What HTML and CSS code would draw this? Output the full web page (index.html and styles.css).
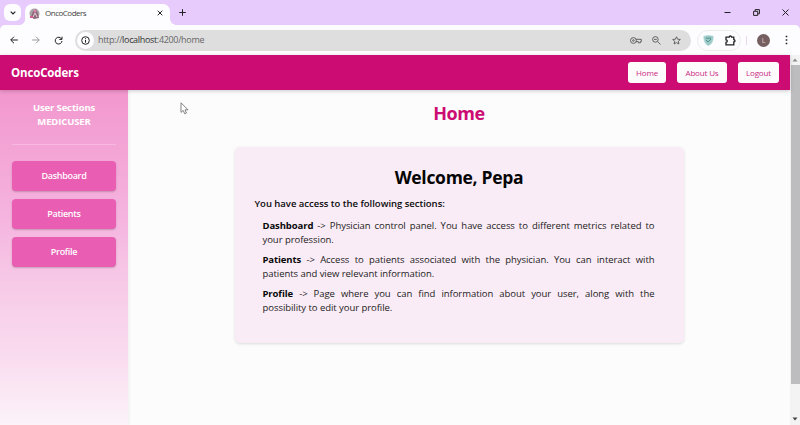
FILE: index.html
```html
<!DOCTYPE html>
<html lang="en">
<head>
<meta charset="utf-8">
<title>OncoCoders</title>
<link rel="stylesheet" href="styles.css">
</head>
<body>
<div class="tabs">
  <div class="tab-search"><svg width="6" height="4" viewBox="0 0 6 4"><path d="M.7.7 3 3 5.3.7"/></svg></div>
  <div class="tab">
    <svg class="favicon" width="11" height="11" viewBox="0 0 11 11"><circle cx="5.5" cy="5.5" r="5" fill="#a9a3a5"/><path d="M2 9 4 3l3-2 2 5 1 4-5 1z" fill="#8c697b"/><circle cx="6" cy="3" r="1.5" fill="#d982b0"/><path d="m4 9 2-4 2 4" stroke="#e8ced9" fill="none"/><path d="M1 8h3v2H1z" fill="#d85b91"/></svg>
    <span class="tab-title">OncoCoders</span>
    <svg class="tab-close" width="6" height="6" viewBox="0 0 6 6"><path d="m.7.7 4.6 4.6m0-4.6L.7 5.3"/></svg>
  </div>
  <svg class="plus" width="7" height="7" viewBox="0 0 7 7"><path d="M3.5.2v6.6M.2 3.5h6.6"/></svg>
  <div class="window-controls">
    <svg width="7" height="7" viewBox="0 0 7 7"><path d="M.5 3.5h6"/></svg>
    <svg width="7" height="7" viewBox="0 0 7 7"><path d="M.6 2.3h4.1v4.1H.6zM2.2 2V.6h4.2v4.2H5"/></svg>
    <svg width="7" height="7" viewBox="0 0 7 7"><path d="m.5.5 6 6m0-6-6 6"/></svg>
  </div>
</div>
<div class="toolbar">
  <svg class="back" width="8" height="8" viewBox="0 0 8 8"><path d="M7.8 4H.8M4 .7.7 4 4 7.3"/></svg>
  <svg class="forward" width="8" height="8" viewBox="0 0 8 8"><path d="M.2 4h7M4 .7 7.3 4 4 7.3"/></svg>
  <svg class="reload" width="9" height="9" viewBox="0 0 9 9"><path d="M7.6 3A3.4 3.4 0 1 0 8 5M8 .7v2.7H5.3"/></svg>
  <div class="address">
    <span class="site-info"><svg width="9" height="9" viewBox="0 0 9 9"><circle cx="4.5" cy="4.5" r="3.8"/><path d="M4.5 4v2.7M4.5 2.2v1"/></svg></span>
    <span class="url">http://<b>localhost</b>:4200/home</span>
    <div class="address-icons">
      <svg width="12" height="9" viewBox="0 0 12 9"><circle cx="3.4" cy="4.5" r="2.9"/><circle cx="3.4" cy="4.5" r=".8"/><path d="M6 3.3h5.3v2.3h-.9v1.2H8.3V5.6H6"/></svg>
      <svg width="9" height="9" viewBox="0 0 9 9"><circle cx="3.4" cy="3.4" r="2.8"/><path d="m5.5 5.5 3 3M2 3.4h2.8"/></svg>
      <svg width="9" height="9" viewBox="0 0 9 9"><path d="m4.5.8 1.1 2.4 2.7.3-2 1.8.6 2.7-2.4-1.4L2.1 8l.6-2.7-2-1.8 2.7-.3z"/></svg>
    </div>
  </div>
  <div class="extensions">
    <svg width="11" height="11" viewBox="0 0 11 11"><path d="M.7 1.2 5.5.2l4.8 1C10.3 6 9 9 5.5 10.8 2 9 .7 6 .7 1.2z" fill="#9cc8c5" stroke="#b8e3e4" stroke-width=".6"/><path d="M3 3.2h5M3 5l2 2 3-3" stroke="#52948f" fill="none"/></svg>
    <svg class="puzzle" width="11" height="11" viewBox="0 0 11 11"><path d="M1 2.2h3.2a1.2 1.2 0 0 1 2.4 0h2.2v2.4a1.2 1.2 0 0 1 0 2.4v2.8H1V7.4a1.3 1.3 0 0 0 0-2.6z"/></svg>
  </div>
  <div class="divider"></div>
  <div class="avatar">L</div>
  <svg class="more" width="3" height="10" viewBox="0 0 3 10"><path d="M.7.7h1.6v1.6H.7zM.7 4.2h1.6v1.6H.7zM.7 7.7h1.6v1.6H.7z"/></svg>
</div>
<div class="viewport">
  <div class="app">
    <header>
      <div class="brand">OncoCoders</div>
      <nav><a class="nav-home">Home</a><a class="nav-about">About Us</a><a class="nav-logout">Logout</a></nav>
    </header>
    <div class="body">
      <aside>
        <div class="user"><span>User Sections</span><br><span class="role">MEDICUSER</span></div>
        <a>Dashboard</a><a>Patients</a><a>Profile</a>
      </aside>
      <main>
        <h1>Home</h1>
        <section>
          <h2>Welcome, Pepa</h2>
          <h3>You have access to the following sections:</h3>
          <p><b>Dashboard</b> -&gt; Physician control panel. You have access to different metrics related to your profession.</p>
          <p><b>Patients</b> -&gt; Access to patients associated with the physician. You can interact with patients and view relevant information.</p>
          <p><b>Profile</b> -&gt; Page where you can find information about your user, along with the possibility&nbsp;to edit your profile.</p>
        </section>
      </main>
    </div>
  </div>
  <div class="scrollbar">
    <svg width="6" height="4" viewBox="0 0 6 4"><path d="M3 .5 5.5 3.5h-5z" fill="#8a8a8a"/></svg>
    <div class="thumb"></div>
    <svg class="down" width="6" height="4" viewBox="0 0 6 4"><path d="M.5.5h5L3 3.5z" fill="#444"/></svg>
  </div>
</div>
<svg class="cursor" width="9" height="13" viewBox="0 0 9 13"><path d="M1 .8v9.6l2.2-2 1.5 3.4 1.7-.8L5 7.8h3z" fill="#fff" stroke="#666" stroke-width=".8"/></svg>
</body>
</html>
```
FILE: styles.css
```css
* { box-sizing: border-box; }
body { margin: 0; width: 800px; height: 425px; overflow: hidden; display: flex; flex-direction: column; background: #e6cbfc; font: 10px/14px "Open Sans", "Noto Sans", sans-serif; color: #222; }
svg { display: block; flex: none; fill: none; stroke: #222; stroke-width: 1; }
.tabs { height: 25px; display: flex; align-items: center; }
.tab-search { width: 17px; height: 17px; margin-left: 4px; border-radius: 6px; background: #fdfcfe; display: grid; place-items: center; }
.tab-search svg { stroke-width: 1.2; }
.tab { position: relative; width: 145px; height: 21px; margin: 4px 0 0 4px; padding: 0 7px 3px 4px; border-radius: 7px 7px 0 0; background: #fdfcfe; display: flex; align-items: center; }
.tab::after { content: ""; position: absolute; left: 100%; bottom: 0; width: 6px; height: 6px; background: radial-gradient(circle at 100% 0, transparent 5.5px, #fdfcfe 6px); }
.tab::before { content: ""; position: absolute; right: 100%; bottom: 0; width: 5px; height: 5px; background: radial-gradient(circle at 0 0, transparent 4.5px, #fdfcfe 5px); }
.favicon { stroke: none; }
.tab-title { margin-left: 5px; font-size: 8px; letter-spacing: -.5px; color: #444; }
.tab-close { margin-left: auto; }
.plus { margin-left: 9px; }
.window-controls { display: flex; gap: 22px; margin: 0 11px 0 auto; }
.toolbar { height: 30px; padding-left: 10px; border-radius: 5px 5px 0 0; background: #fdfcfe; display: flex; align-items: center; }
.forward { margin-left: 14px; stroke: #999; }
.reload { margin-left: 14px; }
.address { width: 616px; height: 21px; margin-left: 12px; padding: 0 10px 0 2px; border-radius: 11px; background: #dededf; display: flex; align-items: center; }
.site-info { width: 17px; height: 17px; border-radius: 50%; background: #fdfcfe; display: grid; place-items: center; }
.url { margin-left: 4px; font-size: 9px; letter-spacing: -.33px; color: #666; }
.url b { font-weight: 400; color: #333; }
.address-icons { display: flex; align-items: center; gap: 11px; margin-left: auto; }
.address-icons svg { stroke: #555; stroke-width: .9; }
.address-icons svg:first-child { margin-right: -1px; }
.extensions { width: 44px; height: 21px; margin-left: 6px; padding: 0 4px 0 5px; border: 1px solid #ececef; border-radius: 11px; display: flex; align-items: center; justify-content: space-between; }
.puzzle { stroke-width: 1.3; }
.divider { width: 1px; height: 9px; margin-left: 5px; background: #ead6ef; }
.avatar { width: 13px; height: 13px; margin-left: 10px; border-radius: 50%; background: #755f61; color: #e6cccc; font-size: 7px; line-height: 13px; text-align: center; }
.more { margin-left: 15px; fill: #222; stroke: none; }
.viewport { height: 370px; display: flex; }
.app { width: 790px; display: flex; flex-direction: column; background: #fcfcfc; }
header { position: relative; height: 35px; padding: 0 11px; display: flex; align-items: center; justify-content: space-between; background: #cc0c72; box-shadow: 0 1px 4px #0003; }
.brand { font-size: 11.5px; font-weight: 700; color: #fff; letter-spacing: -.15px; padding-top: 1px; }
nav { display: flex; gap: 11px; }
nav a { height: 21px; border-radius: 3px; background: #fefbfd; color: #c92b83; font-size: 8px; line-height: 22px; text-align: center; letter-spacing: -.15px; }
.nav-home { width: 38px; }
.nav-about { width: 50px; }
.nav-logout { width: 41px; }
.body { flex: 1; display: flex; }
aside { width: 128px; padding: 11px 12px; background: linear-gradient(#f297ce, #f5b4df 38%, #f7cae7 58%, #f9dcef 80%, #fcf3f9); box-shadow: 1px 0 3px #0001; }
.user { height: 44px; margin-bottom: 16px; border-bottom: 1px solid #f9b8df; color: #fff; font-size: 9.5px; font-weight: 700; text-align: center; letter-spacing: -.13px; }
aside a { display: block; height: 30px; margin-bottom: 8px; border-radius: 4px; background: #e95db3; box-shadow: 0 1px 2px #0003; color: #fff; font-size: 9px; font-weight: 600; line-height: 30px; text-align: center; letter-spacing: -.3px; }
main { flex: 1; padding: 10px 0 0; }
h1 { margin: 0 0 20px; color: #cc0c72; font-size: 18px; font-weight: 700; line-height: 27px; text-align: center; letter-spacing: -.4px; }
section { width: 449px; height: 196px; margin: 0 auto; padding: 17px 29px 0 20px; border-radius: 5px; background: #faecf6; box-shadow: 0 1px 3px #0002; color: #222; }
h2 { margin: 0 -9px 0 0; color: #050505; font-size: 17.5px; font-weight: 700; line-height: 27px; height: 28px; text-align: center; letter-spacing: -.3px; }
h3 { margin: 5px 0 8px; color: #090909; font-size: 9.5px; font-weight: 600; line-height: 14px; letter-spacing: -.02px; }
p { margin: 0 0 6px 8px; font-size: 9.5px; line-height: 14px; text-align: justify; letter-spacing: -.05px; }
p b { color: #080808; letter-spacing: -.1px; }
.scrollbar { width: 10px; padding: 3px 0 4px; background: #f3f3f3; display: flex; flex-direction: column; align-items: center; }
.scrollbar svg { stroke: none; }
.thumb { width: 9px; height: 319px; margin-top: 3px; background: #bdbdbf; }
.down { margin-top: auto; }
.cursor { position: absolute; left: 180px; top: 102px; }
```
